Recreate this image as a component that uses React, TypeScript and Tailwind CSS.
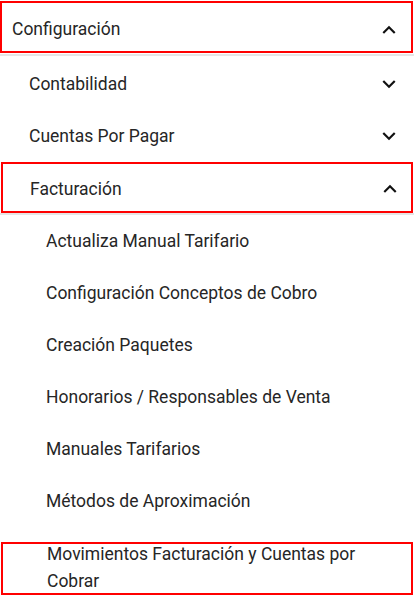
import React from "react";

const ExpandMore = () => (
  <svg width="26" height="26" viewBox="0 0 24 24" className="shrink-0">
    <path d="M16.59 8.59L12 13.17 7.41 8.59 6 10l6 6 6-6z" fill="#111" />
  </svg>
);
const ExpandLess = () => (
  <svg width="26" height="26" viewBox="0 0 24 24" className="shrink-0">
    <path d="M12 8l-6 6 1.41 1.41L12 10.83l4.59 4.58L18 14z" fill="#111" />
  </svg>
);

const subItems = [
  "Actualiza Manual Tarifario",
  "Configuración Conceptos de Cobro",
  "Creación Paquetes",
  "Honorarios / Responsables de Venta",
  "Manuales Tarifarios",
  "Métodos de Aproximación",
];

export default function App() {
  return (
    <div
      className="w-[414px] h-[605px] overflow-hidden bg-white text-[17.5px] text-[#262626]"
      style={{ fontFamily: "Roboto, 'Noto Sans', sans-serif" }}
    >
      <div className="pt-[1px]">
        <div className="w-[413px] h-[52px] border-2 border-[#ff0000] flex items-center justify-between pl-[10px] pr-[9px] pt-[5px]">
          <span>Configuración</span>
          <ExpandLess />
        </div>
        <div className="mt-[1px] h-[2px] bg-[#e6e6e6]" />
      </div>
      <div className="h-[52px] mt-[2px] flex items-center justify-between pl-[29px] pr-[12px]">
        <span>Contabilidad</span>
        <ExpandMore />
      </div>
      <div className="h-[52px] flex items-center justify-between pl-[29px] pr-[12px]">
        <span>Cuentas Por Pagar</span>
        <ExpandMore />
      </div>
      <div className="ml-[1px] w-[412px] h-[51px] border-2 border-[#ff0000] flex items-center justify-between pl-[27px] pr-[8px] pt-[3px]">
        <span>Facturación</span>
        <ExpandLess />
      </div>
      <div className="h-[2px] bg-[#e6e6e6]" />
      {subItems.map((t) => (
        <div key={t} className="h-[52px] flex items-center pl-[46px]">
          <span>{t}</span>
        </div>
      ))}
      <div className="mt-[15px] ml-[1px] w-[412px] h-[53px] border-2 border-[#ff0000]">
        <div className="pl-[44px] pr-[30px] leading-[27px] -mt-[3px]">
          Movimientos Facturación y Cuentas por Cobrar
        </div>
      </div>
    </div>
  );
}
